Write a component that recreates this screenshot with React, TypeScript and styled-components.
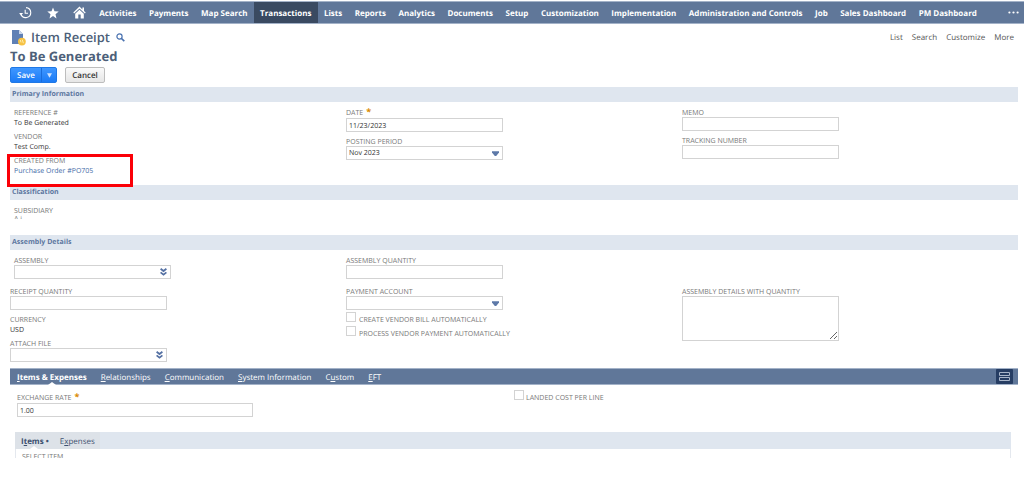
import React from "react";
import styled, { createGlobalStyle, css } from "styled-components";

const color = {
  bar: "#607799",
  barEdge: "#a3b2c8",
  active: "#3a4a61",
  heading: "#4d5f79",
  section: "#dfe6ef",
  sectionText: "#5d779f",
  label: "#777777",
  text: "#333333",
  link: "#3f6ca8",
  line: "#d3d3d3",
};

const GlobalStyle = createGlobalStyle`
  *, *::before, *::after { box-sizing: border-box; }
  body {
    margin: 0;
    background: #fff;
    color: ${color.text};
    font-family: "Open Sans", "Liberation Sans", sans-serif;
    font-size: 7px;
    line-height: 10px;
    text-rendering: geometricPrecision;
  }
  a { color: inherit; text-decoration: none; }
  button, input, select, textarea { font: inherit; color: inherit; margin: 0; text-rendering: inherit; }
  h1, h2 { margin: 0; }
`;

/* ---------- top navigation ---------- */

const NavBar = styled.nav`
  display: flex;
  align-items: stretch;
  height: 23px;
  margin-top: 1px;
  padding-left: 12px;
  background: ${color.bar};
  border-top: 1px solid ${color.barEdge};
  border-bottom: 1px solid ${color.barEdge};
  color: #fff;
`;

const NavIcon = styled.a`
  display: flex;
  align-items: center;
  justify-content: center;
  width: 27px;
`;

const NavList = styled.div`
  display: flex;
  flex: 1;
  margin-right: 20px;
`;

const NavLink = styled.a<{ $active?: boolean }>`
  display: flex;
  flex: 1 1 auto;
  align-items: center;
  justify-content: center;
  padding: 2px 6px 0;
  font-size: 8px;
  font-weight: 700;
  white-space: nowrap;
  background: ${(p) => (p.$active ? color.active : "transparent")};
`;

const NavMore = styled.button`
  display: flex;
  align-items: center;
  padding: 0 5px;
  border: 0;
  background: none;
`;

/* ---------- page header ---------- */

const Page = styled.main`
  padding: 4px 6px 0 10px;
`;

const HeaderRow = styled.div`
  display: flex;
  align-items: center;
  height: 18px;
`;

const PageTitle = styled.h1`
  margin: 0 6px 0 5px;
  font-size: 13px;
  font-weight: 600;
  line-height: 18px;
  color: ${color.heading};
`;

const IconButton = styled.button`
  display: flex;
  padding: 0;
  border: 0;
  background: none;
`;

const PageLinks = styled.div`
  display: flex;
  gap: 9px;
  margin-left: auto;
  padding: 2px 4px 0 0;
  font-size: 8px;
  color: #555;
`;

const RecordName = styled.h2`
  padding: 1px 0 2px;
  font-size: 13px;
  font-weight: 700;
  line-height: 18px;
  color: ${color.heading};
`;

const ButtonRow = styled.div`
  display: flex;
  gap: 8px;
  margin-bottom: 4px;
`;

const SplitButton = styled.div`
  display: flex;
  width: 47px;
  height: 16px;
  border: 1px solid #1f78e6;
  border-radius: 2px;
  background: linear-gradient(#3f97ff, #1b7bf6);
  color: #fff;
`;

const SaveButton = styled.button`
  flex: 1;
  padding: 2px 0 0;
  border: 0;
  background: none;
  font-size: 8px;
  font-weight: 600;
`;

const SaveMenuButton = styled(IconButton)`
  align-items: center;
  justify-content: center;
  width: 15px;
  border-left: 1px solid #1a6ddb;
`;

const CancelButton = styled.button`
  width: 40px;
  height: 16px;
  padding: 2px 0 0;
  border: 1px solid #bdbdbd;
  border-radius: 2px;
  background: linear-gradient(#fafafa, #e6e6e6);
  font-size: 8px;
  font-weight: 600;
`;

/* ---------- sections and fields ---------- */

const SectionTitle = styled.h2`
  height: 15px;
  padding: 0 2px;
  background: ${color.section};
  color: ${color.sectionText};
  font-size: 7px;
  font-weight: 700;
  line-height: 16px;
`;

const FieldGrid = styled.div<{ $minHeight?: number; $spaced?: boolean }>`
  display: grid;
  grid-template-columns: repeat(3, minmax(0, 1fr));
  align-items: start;
  padding-top: ${(p) => (p.$spaced ? 7 : 5)}px;
  min-height: ${(p) => p.$minHeight ?? 0}px;
`;

const FieldColumn = styled.div<{ $indent?: boolean }>`
  display: flex;
  flex-direction: column;
  align-items: flex-start;
  gap: 4px;
  padding-left: ${(p) => (p.$indent ? 4 : 0)}px;
`;

const FieldBox = styled.div<{ $wide?: boolean }>`
  display: flex;
  flex-direction: column;
  width: ${(p) => (p.$wide ? 236 : 157)}px;
`;

const labelStyle = css`
  font-size: 7px;
  color: ${color.label};
  white-space: nowrap;
  text-transform: uppercase;
`;

const Label = styled.label<{ $required?: boolean }>`
  ${labelStyle}
  padding-top: 3px;
  line-height: 7px;
  ${(p) =>
    p.$required &&
    css`
      line-height: 8px;
      &::after {
        content: "*";
        margin-left: 3px;
        color: #d98a00;
        font-size: 9px;
        font-weight: 700;
        line-height: 1px;
      }
    `}
`;

const Caption = styled.span`
  ${labelStyle}
  padding-top: 3px;
  line-height: 7px;
`;

const Value = styled.span`
  padding-top: 3px;
  line-height: 7px;
`;

const ValueLink = styled.a`
  color: ${color.link};
`;

const controlStyle = css`
  width: 100%;
  height: 14px;
  padding: 2px 2px 0;
  border: 1px solid ${color.line};
  border-radius: 0;
  background: #fff;
  outline: 0;
`;

const TextInput = styled.input`
  ${controlStyle}
`;

const SelectWrap = styled.div`
  display: grid;
  align-items: center;
  > * { grid-area: 1 / 1; }
  > svg { justify-self: end; margin-right: 4px; pointer-events: none; }
  > button { justify-self: end; margin-right: 4px; }
`;

const Select = styled.select`
  ${controlStyle}
  appearance: none;
`;

const TextArea = styled.textarea`
  width: 100%;
  height: 45px;
  padding: 2px;
  border: 1px solid ${color.line};
  display: block;
`;

const CheckRow = styled.label<{ $gap?: number }>`
  ${labelStyle}
  display: flex;
  align-items: flex-end;
  gap: ${(p) => p.$gap ?? 3}px;
  height: 14px;
`;

const CheckBox = styled.input`
  appearance: none;
  align-self: flex-start;
  width: 10px;
  height: 10px;
  border: 1px solid ${color.line};
  background: #fff;
`;

const CheckList = styled.div`
  margin-top: -2px;
`;

const Highlighted = styled.div`
  position: relative;
  &::after {
    content: "";
    position: absolute;
    top: -1px;
    left: -7px;
    width: 126px;
    height: 33px;
    border: 3px solid #fb0007;
    pointer-events: none;
  }
`;

const ClippedValue = styled.div`
  height: 4px;
  overflow: hidden;
  line-height: 10px;
  color: ${color.label};
`;

/* ---------- tabs ---------- */

const TabBar = styled.div`
  display: flex;
  align-items: stretch;
  height: 17px;
  margin-top: 6px;
  padding: 0 5px 0 7px;
  gap: 14px;
  background: ${color.bar};
  border-top: 1px solid ${color.barEdge};
  border-bottom: 1px solid ${color.barEdge};
  color: #fff;
  font-size: 8px;
`;

const Tab = styled.a<{ $active?: boolean }>`
  position: relative;
  line-height: 17px;
  white-space: nowrap;
  font-weight: ${(p) => (p.$active ? 700 : 400)};
  &::after {
    content: "";
    display: ${(p) => (p.$active ? "block" : "none")};
    position: absolute;
    left: calc(50% - 4px);
    bottom: -1px;
    border: 4px solid transparent;
    border-top: 0;
    border-bottom: 3px solid #fff;
  }
`;

const LayoutToggle = styled(IconButton)`
  align-items: center;
  justify-content: center;
  width: 17px;
  margin-left: auto;
  border-radius: 1px;
  background: #263d63;
`;

const TabPanel = styled.div`
  padding: 5px 7px 0 5px;
`;

const TabFields = styled.div`
  display: grid;
  grid-template-columns: repeat(2, minmax(0, 1fr));
  align-items: start;
  padding-left: 2px;
  min-height: 42px;
`;

const RateField = styled(FieldBox)`
  padding-top: 2px;
`;

const SubTabBar = styled.div`
  display: flex;
  height: 17px;
  background: ${color.section};
  color: #3e5170;
  font-size: 8px;
`;

const SubTab = styled(Tab)`
  height: 17px;
  padding: 0 5px 0 6px;
  line-height: 19px;
  background: #dde2e8;
  &::after { bottom: 0; }
`;

const SubPanel = styled.div`
  height: 9px;
  padding: 4px 6px 0;
  border: 1px solid #e4e8ee;
  border-width: 0 1px;
  overflow: hidden;
  line-height: 10px;
`;

/* ---------- icons ---------- */

const HistoryIcon = () => (
  <svg width="13" height="13" viewBox="0 0 13 13" fill="none" stroke="#fff" strokeWidth="1.1">
    <path d="M7 1.6A5 5 0 1 1 2 8.2" />
    <path d="M6.2 3.8V7.2H9" />
    <path d="M0.2 7H4.2L1.8 9.6Z" fill="#fff" stroke="none" />
  </svg>
);

const StarIcon = () => (
  <svg width="12" height="12" viewBox="0 0 12 12" fill="#fff">
    <path d="M6 0.4 7.5 4.3 11.7 4.6 8.5 7.2 9.5 11.4 6 9.1 2.5 11.4 3.5 7.2 0.3 4.6 4.5 4.3Z" />
  </svg>
);

const HomeIcon = () => (
  <svg width="13" height="13" viewBox="0 0 13 13" fill="#fff">
    <path d="M6.5 0.6 0.3 6.6 1.1 7.5 6.5 2.4 11.9 7.5 12.7 6.6 11 5V1.4H9.4V3.4Z" />
    <path d="M2.2 7.8 6.5 3.7 10.8 7.8V12.6H7.7V8.6H5.3V12.6H2.2Z" />
  </svg>
);

const DotsIcon = () => (
  <svg width="11" height="3" viewBox="0 0 11 3" fill="#fff">
    <circle cx="1.4" cy="1.5" r="1.1" />
    <circle cx="5.5" cy="1.5" r="1.1" />
    <circle cx="9.6" cy="1.5" r="1.1" />
  </svg>
);

const ReceiptIcon = () => (
  <svg width="16" height="17" viewBox="0 0 16 17">
    <path d="M2 1H9L13 5V15H2Z" fill="#5f80b5" />
    <path d="M9 1V5H13Z" fill="#c9d6ea" />
    <circle cx="11.9" cy="12.6" r="3.9" fill="#f6c244" />
    <path d="M10.3 11 11 13.4M12.2 10.6 13.4 14.2" stroke="#fff0b8" strokeWidth="0.9" />
  </svg>
);

const SearchIcon = () => (
  <svg width="9" height="9" viewBox="0 0 9 9" fill="none" stroke="#4a72b0">
    <circle cx="3.5" cy="3.5" r="2.6" strokeWidth="1.2" />
    <path d="M5.5 5.5 8.3 8.2" strokeWidth="1.7" />
  </svg>
);

const SmallArrow = () => (
  <svg width="5" height="5" viewBox="0 0 5 5">
    <path d="M0 0.3H5L2.5 4.8Z" fill="#cfe3ff" />
  </svg>
);

const ArrowIcon = () => (
  <svg width="7" height="5" viewBox="0 0 7 5">
    <path d="M0 0.2H7V1.6L4.2 5H2.8L0 1.6Z" fill="#5d79a8" />
  </svg>
);

const DoubleChevron = () => (
  <svg width="7" height="8" viewBox="0 0 7 8" fill="none" stroke="#5470a3" strokeWidth="1.8">
    <path d="M0.6 0.8 3.5 3 6.4 0.8" />
    <path d="M0.6 4.4 3.5 6.6 6.4 4.4" />
  </svg>
);

const LayoutIcon = () => (
  <svg width="11" height="9" viewBox="0 0 11 9" fill="none" stroke="#a9b6ca">
    <path d="M0.5 0.5H10.5V3.5H0.5ZM0.5 5.5H10.5V8.5H0.5Z" />
  </svg>
);

/* ---------- composed fields ---------- */

type FieldProps = { id: string; label: string; required?: boolean; value?: string; wide?: boolean };

const TextField = ({ id, label, required, value, wide }: FieldProps) => (
  <FieldBox $wide={wide}>
    <Label htmlFor={id} $required={required}>{label}</Label>
    <TextInput id={id} defaultValue={value} />
  </FieldBox>
);

const SelectField = ({ id, label, value = "" }: FieldProps) => (
  <FieldBox>
    <Label htmlFor={id}>{label}</Label>
    <SelectWrap>
      <Select id={id} defaultValue={value}>
        <option value={value}>{value}</option>
      </Select>
      <ArrowIcon />
    </SelectWrap>
  </FieldBox>
);

const LookupField = ({ id, label }: FieldProps) => (
  <FieldBox>
    <Label htmlFor={id}>{label}</Label>
    <SelectWrap>
      <TextInput id={id} />
      <IconButton type="button" aria-label={`${label} options`}>
        <DoubleChevron />
      </IconButton>
    </SelectWrap>
  </FieldBox>
);

const ReadOnly = ({ label, children }: { label: string; children: React.ReactNode }) => (
  <FieldBox>
    <Caption>{label}</Caption>
    <Value>{children}</Value>
  </FieldBox>
);

const NAV = [
  "Activities", "Payments", "Map Search", "Transactions", "Lists", "Reports", "Analytics",
  "Documents", "Setup", "Customization", "Implementation", "Administration and Controls",
  "Job", "Sales Dashboard", "PM Dashboard",
];

export default function App() {
  return (
    <>
      <GlobalStyle />
      <NavBar>
        <NavIcon href="#" aria-label="Recent records"><HistoryIcon /></NavIcon>
        <NavIcon href="#" aria-label="Shortcuts"><StarIcon /></NavIcon>
        <NavIcon href="#" aria-label="Home"><HomeIcon /></NavIcon>
        <NavList>
          {NAV.map((name) => (
            <NavLink key={name} href="#" $active={name === "Transactions"}>{name}</NavLink>
          ))}
        </NavList>
        <NavMore type="button" aria-label="More menus"><DotsIcon /></NavMore>
      </NavBar>

      <Page>
        <HeaderRow>
          <ReceiptIcon />
          <PageTitle>Item Receipt</PageTitle>
          <IconButton type="button" aria-label="Search records"><SearchIcon /></IconButton>
          <PageLinks>
            <a href="#">List</a>
            <a href="#">Search</a>
            <a href="#">Customize</a>
            <a href="#">More</a>
          </PageLinks>
        </HeaderRow>
        <RecordName>To Be Generated</RecordName>
        <ButtonRow>
          <SplitButton>
            <SaveButton type="button">Save</SaveButton>
            <SaveMenuButton type="button" aria-label="Save options"><SmallArrow /></SaveMenuButton>
          </SplitButton>
          <CancelButton type="button">Cancel</CancelButton>
        </ButtonRow>

        <SectionTitle>Primary Information</SectionTitle>
        <FieldGrid $minHeight={83}>
          <FieldColumn $indent>
            <ReadOnly label="Reference #">To Be Generated</ReadOnly>
            <ReadOnly label="Vendor">Test Comp.</ReadOnly>
            <Highlighted>
              <ReadOnly label="Created From">
                <ValueLink href="#">Purchase Order #PO705</ValueLink>
              </ReadOnly>
            </Highlighted>
          </FieldColumn>
          <FieldColumn>
            <TextField id="date" label="Date" value="11/23/2023" required />
            <SelectField id="period" label="Posting Period" value="Nov 2023" />
          </FieldColumn>
          <FieldColumn>
            <TextField id="memo" label="Memo" />
            <TextField id="tracking" label="Tracking Number" />
          </FieldColumn>
        </FieldGrid>

        <SectionTitle>Classification</SectionTitle>
        <FieldGrid $minHeight={35}>
          <FieldColumn $indent>
            <FieldBox>
              <Caption>Subsidiary</Caption>
              <ClippedValue>A i</ClippedValue>
            </FieldBox>
          </FieldColumn>
        </FieldGrid>

        <SectionTitle>Assembly Details</SectionTitle>
        <FieldGrid>
          <FieldColumn $indent>
            <LookupField id="assembly" label="Assembly" />
          </FieldColumn>
          <FieldColumn>
            <TextField id="assembly-qty" label="Assembly Quantity" />
          </FieldColumn>
        </FieldGrid>
        <FieldGrid $spaced>
          <FieldColumn>
            <TextField id="receipt-qty" label="Receipt Quantity" />
            <ReadOnly label="Currency">USD</ReadOnly>
            <LookupField id="attach" label="Attach File" />
          </FieldColumn>
          <FieldColumn>
            <SelectField id="account" label="Payment Account" />
            <CheckList>
              <CheckRow><CheckBox type="checkbox" />Create Vendor Bill Automatically</CheckRow>
              <CheckRow><CheckBox type="checkbox" />Process Vendor Payment Automatically</CheckRow>
            </CheckList>
          </FieldColumn>
          <FieldColumn>
            <FieldBox>
              <Label htmlFor="assembly-details">Assembly Details With Quantity</Label>
              <TextArea id="assembly-details" />
            </FieldBox>
          </FieldColumn>
        </FieldGrid>

        <TabBar>
          <Tab href="#" $active><u>I</u>tems &amp; Expenses</Tab>
          <Tab href="#"><u>R</u>elationships</Tab>
          <Tab href="#"><u>C</u>ommunication</Tab>
          <Tab href="#"><u>S</u>ystem Information</Tab>
          <Tab href="#">C<u>u</u>stom</Tab>
          <Tab href="#"><u>E</u>FT</Tab>
          <LayoutToggle type="button" aria-label="Toggle tab layout"><LayoutIcon /></LayoutToggle>
        </TabBar>
        <TabPanel>
          <TabFields>
            <RateField $wide>
              <TextField id="rate" label="Exchange Rate" value="1.00" required wide />
            </RateField>
            <CheckRow $gap={2}><CheckBox type="checkbox" />Landed Cost Per Line</CheckRow>
          </TabFields>
          <SubTabBar>
            <SubTab href="#" $active>I<u>t</u>ems •</SubTab>
            <SubTab href="#">E<u>x</u>penses</SubTab>
          </SubTabBar>
          <SubPanel><Caption>Select Item</Caption></SubPanel>
        </TabPanel>
      </Page>
    </>
  );
}
